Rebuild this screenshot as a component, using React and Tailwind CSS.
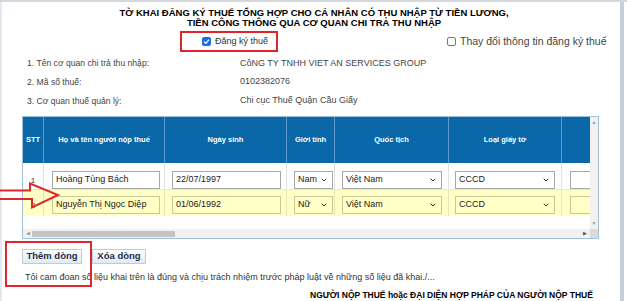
import React from "react";
import { ChevronDown } from "lucide-react";

function Checkbox({ checked }) {
  if (checked) {
    return (
      <span className="inline-flex h-[9px] w-[9px] items-center justify-center rounded-[2px] bg-[#1a6fe0]">
        <svg width="7" height="7" viewBox="0 0 10 10">
          <path d="M1.5 5.2 L4 7.6 L8.6 2.4" fill="none" stroke="#fff" strokeWidth="1.8" />
        </svg>
      </span>
    );
  }
  return <span className="inline-block h-[9px] w-[9px] rounded-[2px] border border-[#777] bg-white" />;
}

function Input({ w, ml, value, yellow, select }) {
  return (
    <div
      className={`flex h-[18px] shrink-0 items-center justify-between border ${
        yellow ? "border-[#c9c89a] bg-[#ffffc6]" : "border-[#a8a8a8] bg-white"
      } pl-[3px] pr-[4px] text-[9px] text-[#222]`}
      style={{ width: w, marginLeft: ml }}
    >
      <span className="whitespace-nowrap">{value}</span>
      {select && <ChevronDown size={8} strokeWidth={3} className="shrink-0 text-[#333]" />}
    </div>
  );
}

const colClass = "grid grid-cols-[21px_121px_122px_48px_114px_113px_28px]";

function Row({ n, yellow, name, date, gender, top }) {
  const cell = `flex items-start border-r ${yellow ? "border-[#e8e6b4]" : "border-[#e2e2e2]"} overflow-hidden`;
  const pt = top;
  return (
    <div className={`${colClass} ${yellow ? "h-[26px] bg-[#ffffc6]" : "h-[27px] bg-white border-b border-[#e6e6e6]"}`}>
      <div className={`${cell} justify-center text-[8px] text-[#333]`} style={{ paddingTop: pt + 4 }}>{n}</div>
      <div className={cell} style={{ paddingTop: pt }}><Input w={108} ml={8} value={name} yellow={yellow} /></div>
      <div className={cell} style={{ paddingTop: pt }}><Input w={109} ml={7} value={date} yellow={yellow} /></div>
      <div className={cell} style={{ paddingTop: pt }}><Input w={39} ml={7} value={gender} yellow={yellow} select /></div>
      <div className={cell} style={{ paddingTop: pt }}><Input w={100} ml={7} value="Việt Nam" yellow={yellow} select /></div>
      <div className={cell} style={{ paddingTop: pt }}><Input w={100} ml={6} value="CCCD" yellow={yellow} select /></div>
      <div className="flex items-start overflow-hidden" style={{ paddingTop: pt }}><Input w={40} ml={8} value="" yellow={yellow} /></div>
    </div>
  );
}

export default function App() {
  return (
    <div className="relative h-[301px] w-[627px] overflow-hidden bg-white text-[#333] [font-family:'Liberation_Sans',Arial,sans-serif]">
      <div className="flex h-full border-t-2 border-[#d3d8df]">
        {/* main content */}
        <div className="flex w-[620px] flex-col border-l-2 border-[#e3e8ee]">
          {/* title */}
          <div className="pt-[6px] pl-[6px] text-center text-[9.5px] font-bold leading-[10px] text-black">
            <div>TỜ KHAI ĐĂNG KÝ THUẾ TỔNG HỢP CHO CÁ NHÂN CÓ THU NHẬP TỪ TIỀN LƯƠNG,</div>
            <div>TIỀN CÔNG THÔNG QUA CƠ QUAN CHI TRẢ THU NHẬP</div>
          </div>
          {/* checkbox row */}
          <div className="mt-[3px] flex h-[21px] items-center">
            <div className="ml-[178px] flex h-[21px] w-[98px] items-center border-2 border-[#e0252d] pl-[20px] text-[9px] text-[#333]">
              <Checkbox checked />
              <span className="ml-[4px]">Đăng ký thuế</span>
            </div>
            <div className="ml-[169px] flex items-center text-[10.5px] text-[#444]">
              <Checkbox />
              <span className="ml-[4px]">Thay đổi thông tin đăng ký thuế</span>
            </div>
          </div>
          {/* info rows */}
          <div className="mt-[2px] flex flex-col text-[8.6px] text-[#444]">
            <div className="flex h-[19px] items-center">
              <span className="ml-[25px] w-[213px]">1. Tên cơ quan chi trả thu nhập:</span>
              <span className="text-[9px]">CôNG TY TNHH VIET AN SERVICES GROUP</span>
            </div>
            <div className="flex h-[18px] items-center">
              <span className="ml-[25px] w-[213px]">2. Mã số thuế:</span>
              <span className="text-[9px]">0102382076</span>
            </div>
            <div className="flex h-[20px] items-center">
              <span className="ml-[25px] w-[213px]">3. Cơ quan thuế quản lý:</span>
              <span className="text-[9px]">Chi cục Thuế Quận Cầu Giấy</span>
            </div>
          </div>
          {/* table frame */}
          <div className="ml-[20px] mt-[5px] flex w-[577px] flex-col border border-[#a3c0da]">
            <div className="flex">
              <div className="w-[567px] overflow-hidden">
                <div className={`${colClass} h-[46px] bg-[#0b68a8] text-[7.5px] font-bold text-white`}>
                  {["STT", "Họ và tên người nộp thuế", "Ngày sinh", "Giới tính", "Quốc tịch", "Loại giấy tờ", ""].map((h, i) => (
                    <div key={i} className={`flex items-center justify-center ${i < 6 ? "border-r border-[#5b9acb]" : ""}`}>
                      {h}
                    </div>
                  ))}
                </div>
                <Row n="1" name="Hoàng Tùng Bách" date="22/07/1997" gender="Nam" top={8} />
                <Row n="2" yellow name="Nguyễn Thị Ngọc Diệp" date="01/06/1992" gender="Nữ" top={6} />
                <div className="h-[13px] bg-white" />
              </div>
              {/* vertical scrollbar */}
              <div className="flex w-[8px] flex-col items-center justify-between bg-[#f1f1f1] py-[3px] text-[5px] leading-[5px] text-[#999]">
                <span>▲</span>
                <span>▼</span>
              </div>
            </div>
            {/* horizontal scrollbar */}
            <div className="flex h-[9px]">
              <div className="flex w-[567px] items-center bg-[#f1f1f1] px-[3px]">
                <span className="text-[5px] text-[#999]">◀</span>
                <div className="ml-[2px] h-[6px] w-[143px] bg-[#c3c3c3]" />
                <span className="ml-auto text-[5px] text-[#555]">▶</span>
              </div>
              <div className="w-[8px] bg-[#dcdcdc]" />
            </div>
          </div>
          {/* buttons */}
          <div className="ml-[20px] mt-[10px] flex gap-[10px]">
            <button className="flex h-[15px] w-[60px] items-center justify-center border border-[#bccddf] bg-gradient-to-b from-white to-[#dfe9f5] text-[9.5px] font-bold text-[#1f2f44]">
              Thêm dòng
            </button>
            <button className="flex h-[15px] w-[54px] items-center justify-center border border-[#bccddf] bg-gradient-to-b from-white to-[#dfe9f5] text-[9.5px] font-bold text-[#1f2f44]">
              Xóa dòng
            </button>
          </div>
          <div className="ml-[23px] mt-[8px] text-[9px] leading-[11px] text-[#333]">
            Tôi cam đoan số liệu khai trên là đúng và chịu trách nhiệm trước pháp luật về những số liệu đã khai./...
          </div>
          <div className="mt-[7px] pl-[308px] text-[8.5px] font-bold leading-[11px] text-black">
            NGƯỜI NỘP THUẾ hoặc ĐẠI DIỆN HỢP PHÁP CỦA NGƯỜI NỘP THUẾ
          </div>
          <div className="flex h-[6px] items-start text-[8px] leading-[8px]">
            <div className="w-[78px]" />
            <div className="w-[83px] overflow-hidden pl-[22px] font-bold text-[#555]">Người ký</div>
          </div>
        </div>
        {/* right bar */}
        <div className="w-[4px] bg-[#c6cfdb]" />
        <div className="flex-1 bg-white" />
      </div>

      {/* annotation: red arrow */}
      <svg className="absolute left-0 top-[182px]" width="62" height="28" viewBox="0 0 62 28">
        <path d="M0 8.5 H30 V1.5 L58 13 L32 25.5 V17 H0" fill="none" stroke="#e0252d" strokeWidth="2" />
      </svg>
      {/* annotation: red box around button */}
      <div className="absolute left-[5px] top-[241px] h-[46px] w-[87px] border-2 border-[#e0252d]" />
    </div>
  );
}
